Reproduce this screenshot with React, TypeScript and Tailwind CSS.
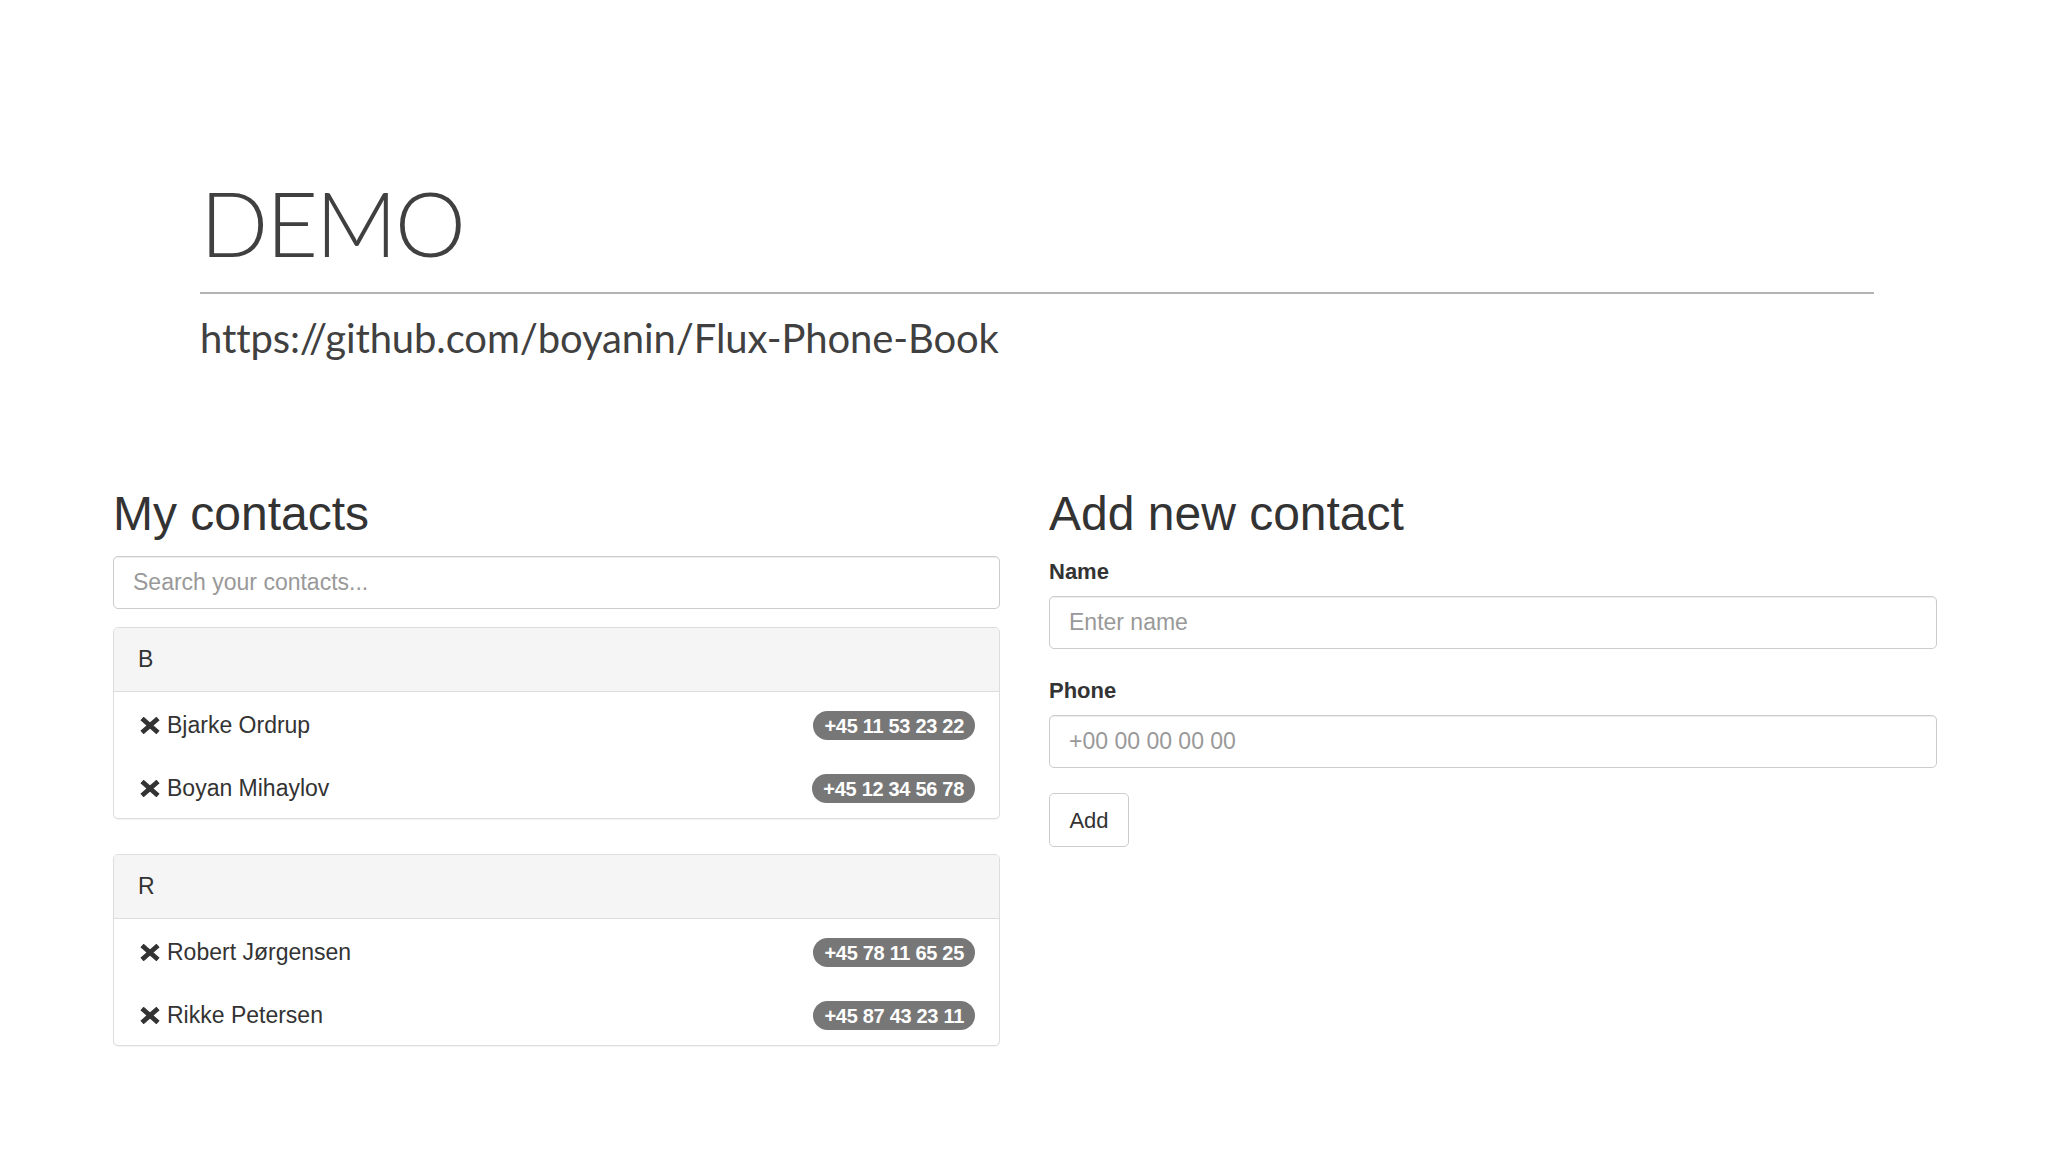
import React from "react";

const RemoveIcon = () => (
  <svg width="20" height="17" viewBox="0 0 20 17" className="shrink-0">
    <path d="M2 1.5 L18 15.5 M18 1.5 L2 15.5" stroke="#333" strokeWidth="4.8" strokeLinecap="butt" fill="none" />
  </svg>
);

type Contact = { name: string; phone: string };

const Panel = ({ letter, contacts, className }: { letter: string; contacts: Contact[]; className: string }) => (
  <div className={`border border-[#ddd] rounded-[5px] bg-white shadow-[0_1px_1px_rgba(0,0,0,0.05)] overflow-hidden ${className}`}>
    <div className="h-[64px] flex items-center pl-[24px] bg-[#f5f5f5] border-b border-[#ddd] text-[23px] text-[#333]">
      {letter}
    </div>
    {contacts.map((c) => (
      <div key={c.name} className="h-[63px] flex items-center pt-[4px] pl-[26px] pr-[24px]">
        <RemoveIcon />
        <span className="ml-[7px] text-[23px] text-[#333] flex-1">{c.name}</span>
        <span className="h-[29px] px-[11px] rounded-full bg-[#777] text-white font-bold text-[20px] flex items-center leading-none tracking-[-0.3px]">
          {c.phone}
        </span>
      </div>
    ))}
  </div>
);

export default function App() {
  const app = { fontFamily: '"Liberation Sans", Arial, sans-serif' };
  const slide = { fontFamily: 'Lato, "Open Sans", sans-serif' };
  return (
    <div className="w-[2048px] h-[1152px] bg-white overflow-hidden">
      <div className="pt-[176px] pl-[200px]" style={slide}>
        <div className="text-[90px] leading-[92px] font-light text-[#404040] h-[92px] tracking-[-2.5px]">DEMO</div>
        <div className="mt-[24px] w-[1674px] h-[2px] bg-[#b4b4b4]" />
        <div className="mt-[20px] text-[40px] leading-[48px] text-[#404040] tracking-[-0.1px]">
          https://github.com/boyanin/Flux-Phone-Book
        </div>
      </div>
      <div className="mt-[127px] pl-[113px] flex gap-[49px]" style={app}>
        <div className="w-[887px] flex flex-col">
          <h2 className="text-[48px] leading-[50px] text-[#333]">My contacts</h2>
          <input
            className="mt-[17px] h-[53px] border border-[#ccc] rounded-[5px] px-[19px] text-[23px] text-[#555] placeholder:text-[#999] shadow-[inset_0_1px_1px_rgba(0,0,0,0.075)] outline-none"
            placeholder="Search your contacts..."
          />
          <Panel
            className="mt-[18px]"
            letter="B"
            contacts={[
              { name: "Bjarke Ordrup", phone: "+45 11 53 23 22" },
              { name: "Boyan Mihaylov", phone: "+45 12 34 56 78" },
            ]}
          />
          <Panel
            className="mt-[35px]"
            letter="R"
            contacts={[
              { name: "Robert Jørgensen", phone: "+45 78 11 65 25" },
              { name: "Rikke Petersen", phone: "+45 87 43 23 11" },
            ]}
          />
        </div>
        <div className="w-[888px] flex flex-col">
          <h2 className="text-[48px] leading-[50px] text-[#333]">Add new contact</h2>
          <label className="mt-[18px] text-[22px] leading-[30px] font-bold text-[#333]">Name</label>
          <input
            className="mt-[9px] h-[53px] border border-[#ccc] rounded-[5px] px-[19px] text-[23px] text-[#555] placeholder:text-[#999] shadow-[inset_0_1px_1px_rgba(0,0,0,0.075)] outline-none"
            placeholder="Enter name"
          />
          <label className="mt-[27px] text-[22px] leading-[30px] font-bold text-[#333]">Phone</label>
          <input
            className="mt-[9px] h-[53px] border border-[#ccc] rounded-[5px] px-[19px] text-[23px] text-[#555] placeholder:text-[#999] shadow-[inset_0_1px_1px_rgba(0,0,0,0.075)] outline-none"
            placeholder="+00 00 00 00 00"
          />
          <button className="mt-[25px] h-[54px] w-[80px] border border-[#ccc] rounded-[5px] bg-white text-[22px] text-[#333]">
            Add
          </button>
        </div>
      </div>
    </div>
  );
}
